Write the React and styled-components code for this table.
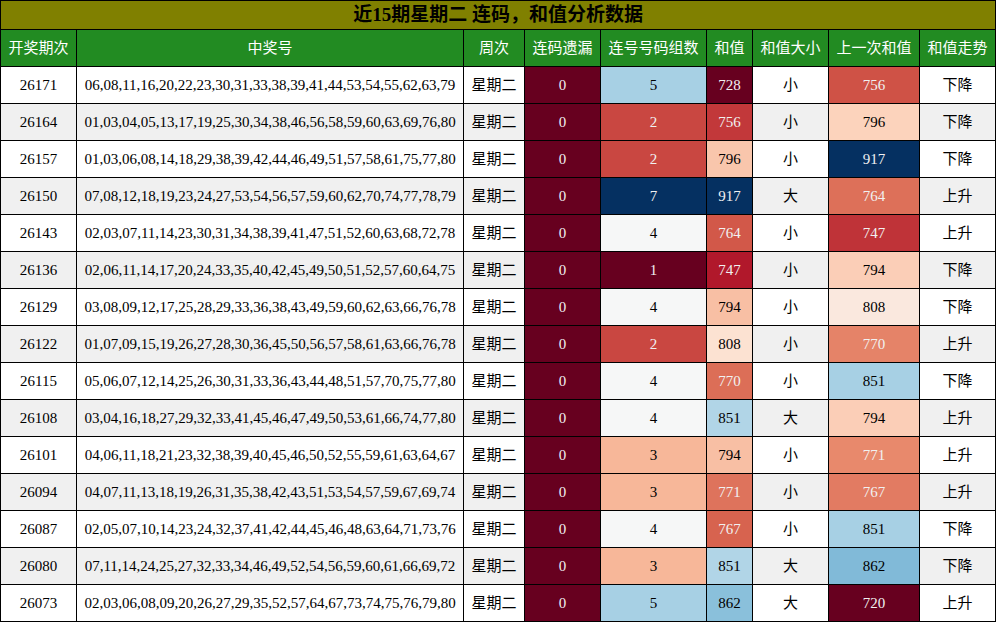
import styled, { createGlobalStyle } from "styled-components";

const draws = [
  [26171, "06,08,11,16,20,22,23,30,31,33,38,39,41,44,53,54,55,62,63,79", 0, 5, 728, "小", 756, "下降"],
  [26164, "01,03,04,05,13,17,19,25,30,34,38,46,56,58,59,60,63,69,76,80", 0, 2, 756, "小", 796, "下降"],
  [26157, "01,03,06,08,14,18,29,38,39,42,44,46,49,51,57,58,61,75,77,80", 0, 2, 796, "小", 917, "下降"],
  [26150, "07,08,12,18,19,23,24,27,53,54,56,57,59,60,62,70,74,77,78,79", 0, 7, 917, "大", 764, "上升"],
  [26143, "02,03,07,11,14,23,30,31,34,38,39,41,47,51,52,60,63,68,72,78", 0, 4, 764, "小", 747, "上升"],
  [26136, "02,06,11,14,17,20,24,33,35,40,42,45,49,50,51,52,57,60,64,75", 0, 1, 747, "小", 794, "下降"],
  [26129, "03,08,09,12,17,25,28,29,33,36,38,43,49,59,60,62,63,66,76,78", 0, 4, 794, "小", 808, "下降"],
  [26122, "01,07,09,15,19,26,27,28,30,36,45,50,56,57,58,61,63,66,76,78", 0, 2, 808, "小", 770, "上升"],
  [26115, "05,06,07,12,14,25,26,30,31,33,36,43,44,48,51,57,70,75,77,80", 0, 4, 770, "小", 851, "下降"],
  [26108, "03,04,16,18,27,29,32,33,41,45,46,47,49,50,53,61,66,74,77,80", 0, 4, 851, "大", 794, "上升"],
  [26101, "04,06,11,18,21,23,32,38,39,40,45,46,50,52,55,59,61,63,64,67", 0, 3, 794, "小", 771, "上升"],
  [26094, "04,07,11,13,18,19,26,31,35,38,42,43,51,53,54,57,59,67,69,74", 0, 3, 771, "小", 767, "上升"],
  [26087, "02,05,07,10,14,23,24,32,37,41,42,44,45,46,48,63,64,71,73,76", 0, 4, 767, "小", 851, "下降"],
  [26080, "07,11,14,24,25,27,32,33,34,46,49,52,54,56,59,60,61,66,69,72", 0, 3, 851, "大", 862, "下降"],
  [26073, "02,03,06,08,09,20,26,27,29,35,52,57,64,67,73,74,75,76,79,80", 0, 5, 862, "大", 720, "上升"],
];

// every draw is a Tuesday
const rows = draws.map(([id, nums, ...rest]) => [id, nums, "星期二", ...rest]);

const headers = ["开奖期次", "中奖号", "周次", "连码遗漏", "连号号码组数", "和值", "和值大小", "上一次和值", "和值走势"];
const widths = [76, 387, 61, 76, 106, 46, 76, 91, 76];

// RdBu_r stops
const stops = [
  [103, 0, 31], [178, 24, 43], [214, 96, 77], [244, 165, 130], [253, 219, 199],
  [247, 247, 247], [209, 229, 240], [146, 197, 222], [67, 147, 195], [33, 102, 172], [5, 48, 97],
];

function rdbu(x) {
  const idx = Math.min(255, Math.floor(x * 256));
  const t = idx / 255;
  const p = t * 10;
  const i = Math.min(9, Math.floor(p));
  const f = p - i;
  return stops[i].map((c, k) => Math.round(c + (stops[i + 1][k] - c) * f));
}

function lum(rgb) {
  const [r, g, b] = rgb.map((c) => {
    const v = c / 255;
    return v <= 0.03928 ? v / 12.92 : Math.pow((v + 0.055) / 1.055, 2.4);
  });
  return 0.2126 * r + 0.7152 * g + 0.0722 * b;
}

function gradient(col) {
  const vals = rows.map((r) => r[col]);
  const lo = Math.min(...vals);
  const hi = Math.max(...vals);
  return vals.map((v) => {
    const x = hi === lo ? 0 : (v - lo) / (hi - lo);
    const rgb = rdbu(x);
    return { bg: `rgb(${rgb.join(",")})`, fg: lum(rgb) < 0.408 ? "#f1f1f1" : "#000000" };
  });
}

const shaded = { 3: gradient(3), 4: gradient(4), 5: gradient(5), 7: gradient(7) };

export default function App() {
  return (
    <>
      <GlobalStyle />
      <Table>
        <colgroup>
          {widths.map((w, i) => (
            <Col key={i} $w={w} />
          ))}
        </colgroup>
        <thead>
          <tr>
            <TitleCell colSpan={9}>近15期星期二 连码，和值分析数据</TitleCell>
          </tr>
          <tr>
            {headers.map((h) => (
              <HeadCell key={h}>{h}</HeadCell>
            ))}
          </tr>
        </thead>
        <tbody>
          {rows.map((row, ri) => (
            <Row key={row[0]} $alt={ri % 2 === 1}>
              {row.map((v, ci) => {
                const s = shaded[ci] && shaded[ci][ri];
                return (
                  <Cell key={ci} $bg={s ? s.bg : null} $fg={s ? s.fg : null}>
                    {v}
                  </Cell>
                );
              })}
            </Row>
          ))}
        </tbody>
      </Table>
    </>
  );
}

const GlobalStyle = createGlobalStyle`
  body {
    margin: 0;
    background: #ffffff;
    font-family: "Liberation Serif", "Noto Sans CJK SC", serif;
  }
`;

const Table = styled.table`
  width: 996px;
  table-layout: fixed;
  border-collapse: collapse;
  font-size: 15px;
  color: #000000;
`;

const Col = styled.col`
  width: ${(p) => p.$w}px;
`;

const TitleCell = styled.th`
  background: #808000;
  color: #000000;
  font-size: 19px;
  font-weight: bold;
  line-height: 24px;
  padding: 2px 0;
  border: 1px solid #000000;
  text-align: center;
`;

const HeadCell = styled.th`
  background: #228b22;
  color: #ffffff;
  font-weight: normal;
  line-height: 20px;
  padding: 8px 0;
  border: 1px solid #000000;
  text-align: center;
  white-space: nowrap;
`;

const Row = styled.tr`
  background: ${(p) => (p.$alt ? "#f0f0f0" : "#ffffff")};
`;

const Cell = styled.td`
  line-height: 20px;
  padding: 8px 0;
  border: 1px solid #000000;
  text-align: center;
  white-space: nowrap;
  background: ${(p) => p.$bg || "transparent"};
  color: ${(p) => p.$fg || "#000000"};
`;
